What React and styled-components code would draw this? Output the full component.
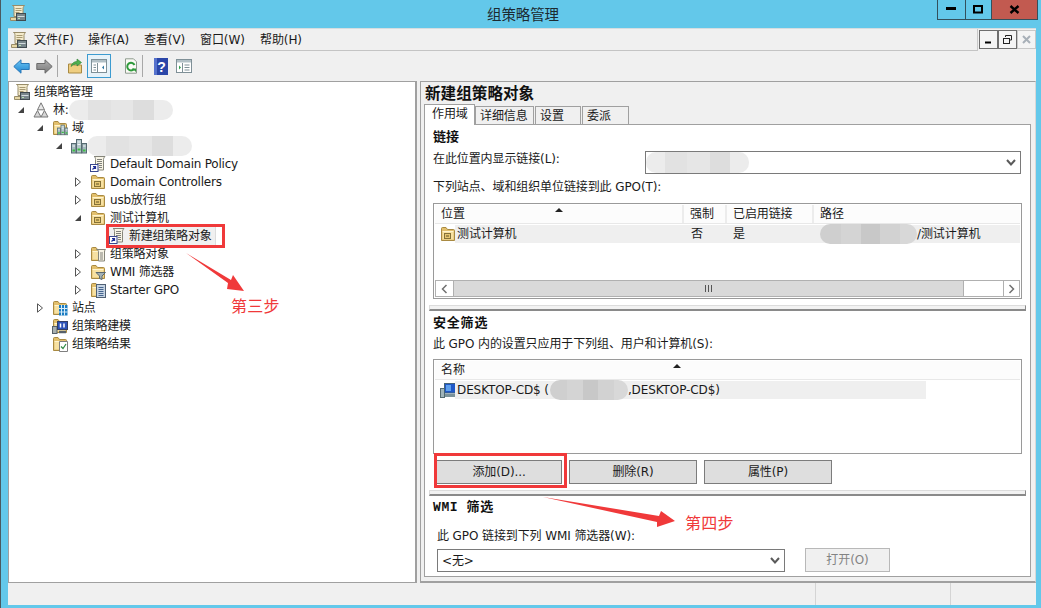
import React from 'react';
import styled, { createGlobalStyle } from 'styled-components';

const GlobalStyle = createGlobalStyle`
  html, body {
    margin: 0;
    padding: 0;
    width: 1041px;
    height: 608px;
    overflow: hidden;
    background: #63c8ea;
  }
  * {
    box-sizing: border-box;
  }
`;

const Page = styled.div`
  position: relative;
  width: 1041px;
  height: 608px;
  display: flex;
  flex-direction: column;
  padding: 0 5px 3px 7px;
  background: #63c8ea;
  border-left: 1px solid #4a5a60;
  font: 12px/16px "DejaVu Sans", "Noto Sans CJK SC", sans-serif;
  letter-spacing: -0.1px;
  color: #1a1a1a;
`;

const TitleBar = styled.header`
  height: 28px;
  flex: none;
  display: grid;
  grid-template-columns: 1fr auto 1fr;
  margin-right: -2px;
`;

const TitleIcon = styled.div`
  padding: 5px 0 0 2px;
`;

const TitleText = styled.h1`
  margin: 5px 0 0;
  font: 400 14.5px/18px "Noto Sans CJK SC", sans-serif;
  color: #1c2a30;
`;

const WindowButtons = styled.div`
  justify-self: end;
  display: flex;
  height: 20px;
  border: 1px solid #33505c;
  border-top: 0;
`;

const WindowButton = styled.button`
  width: ${({ $w }) => $w}px;
  padding: 0;
  border: 0;
  border-left: ${({ $first }) => ($first ? 0 : '1px solid #33505c')};
  background: ${({ $close }) => ($close ? '#c25a50' : 'transparent')};
  display: flex;
  align-items: center;
  justify-content: center;
`;

const Client = styled.div`
  flex: 1;
  min-height: 0;
  display: flex;
  flex-direction: column;
  background: #f0f0f0;
  border-top: 1px solid #d5dde0;
`;

const MenuRow = styled.div`
  height: 22px;
  flex: none;
  display: flex;
`;

const MenuBar = styled.nav`
  flex: 1;
  display: flex;
  align-items: center;
  padding-left: 3px;
  border-right: 1px solid #c8c8c8;
  border-bottom: 1px solid #c4c4c4;
`;

const MenuItem = styled.span`
  width: ${({ $w }) => $w}px;
  flex: none;
`;

const MdiButtons = styled.div`
  display: flex;
  padding: 1px 0 0 1px;
  height: 21px;
`;

const MdiButton = styled.button`
  width: 19px;
  height: 19px;
  padding: 0;
  border: 1px solid ${({ $off }) => ($off ? '#c8c8c8' : '#6e6e6e')};
  background: #f4f4f4;
  display: flex;
  align-items: center;
  justify-content: center;
`;

const Toolbar = styled.div`
  height: 30px;
  flex: none;
  display: flex;
  align-items: center;
  padding-left: 4px;
`;

const ToolIcon = styled.div`
  width: ${({ $w }) => $w || 18}px;
  height: 24px;
  margin-left: ${({ $gap }) => $gap || 0}px;
  display: flex;
  align-items: center;
  justify-content: center;
  flex: none;
  ${({ $active }) => $active && `
    background: #e6f2f9;
    border: 1px solid #3c9bd0;
  `}
`;

const ToolSeparator = styled.div`
  width: 1px;
  height: 22px;
  margin-left: ${({ $gap }) => $gap}px;
  background: #a8a8a8;
  flex: none;
`;

const Main = styled.main`
  flex: 1;
  min-height: 0;
  display: flex;
`;

const TreePane = styled.section`
  width: 409px;
  flex: none;
  padding-top: 1px;
  background: #fff;
  border-top: 1px solid #a0a0a0;
  border-left: 1px solid #a0a0a0;
  border-right: 2px solid #a0a0a0;
  border-bottom: 1px solid #a0a0a0;
  letter-spacing: -0.22px;
`;

const TreeRow = styled.div`
  height: 18px;
  display: flex;
  align-items: center;
  padding-left: ${({ $level }) => ($level === 0 ? 5 : 19 * $level - 14)}px;
  white-space: nowrap;
`;

const ExpanderSlot = styled.span`
  width: 19px;
  height: 18px;
  flex: none;
  display: flex;
  align-items: center;
  padding-left: 3px;
`;

const TreeItem = styled.span`
  display: flex;
  align-items: center;
  flex: none;
  ${({ $selected }) => $selected && `
    height: 20px;
    margin-left: -2px;
    padding: 0 4px 0 1px;
    background: #f0f0f0;
    border: 1px solid #dcdcdc;
  `}
`;

const TreeLabel = styled.span`
  margin-left: 4px;
`;

const Blob = styled.span`
  display: inline-block;
  flex: none;
  width: ${({ $w }) => $w}px;
  height: ${({ $h }) => $h || 20}px;
  margin: -2px ${({ $mr }) => $mr || 0}px -2px ${({ $ml }) => $ml || 0}px;
  vertical-align: middle;
  border-radius: 10px;
  background: linear-gradient(90deg,
    #ececec 0 18%, #e2e2e2 18% 40%, #e6e6e6 40% 62%, #dddddd 62% 82%, #ececec 82% 100%);
`;

const DarkBlob = styled(Blob)`
  background: linear-gradient(90deg,
    #cfcfcf 0 22%, #d4d4d4 22% 42%, #c8c8c8 42% 62%, #d2d2d2 62% 82%, #d8d8d8 82% 100%);
`;

const Splitter = styled.div`
  width: 3px;
  flex: none;
  background: #f0f0f0;
`;

const DetailPane = styled.section`
  flex: 1;
  min-width: 0;
  display: flex;
  flex-direction: column;
  padding: 0 4px 4px 3px;
  background: #f0f0f0;
  border: 1px solid #a0a0a0;
  border-right-color: #d8d8d8;
  border-bottom: 2px solid #a0a0a0;
`;

const DetailTitle = styled.h2`
  margin: 0 0 0 1px;
  height: 20px;
  flex: none;
  font: 700 15.6px/20px "Noto Sans CJK SC", sans-serif;
  letter-spacing: 0;
  color: #111;
`;

const Tabs = styled.div`
  height: 20px;
  flex: none;
  display: flex;
  align-items: flex-end;
  position: relative;
  z-index: 1;
  margin: 3px 0 -1px;
`;

const Tab = styled.div`
  width: ${({ $w }) => $w}px;
  height: ${({ $active }) => ($active ? 21 : 19)}px;
  flex: none;
  padding-left: ${({ $active }) => ($active ? 7 : 4)}px;
  line-height: 18px;
  background: ${({ $active }) => ($active ? '#fff' : '#f0f0f0')};
  border: 1px solid #a0a0a0;
  border-bottom: ${({ $active }) => ($active ? 0 : '1px solid #a0a0a0')};
  margin-right: ${({ $gap }) => $gap || 0}px;
`;

const TabPanel = styled.div`
  flex: 1;
  min-height: 0;
  background: #fff;
  border: 1px solid #a0a0a0;
  padding: 2px 8px 0;
`;

const SectionHead = styled.h3`
  margin: ${({ $mt }) => $mt || 0}px 0 0;
  height: 18px;
  font: 700 13px/18px "Noto Sans CJK SC", sans-serif;
  letter-spacing: ${({ $ls }) => $ls || 0}px;
  color: #111;
`;

const WmiHead = styled(SectionHead)`
  font-family: "Liberation Mono", "Noto Sans CJK SC", monospace;
  letter-spacing: 0.6px;
`;

const FieldLabel = styled.div`
  margin-top: ${({ $mt }) => $mt || 0}px;
  height: 16px;
  white-space: nowrap;
`;

const ComboLabel = styled(FieldLabel)`
  width: 212px;
  flex: none;
`;

const ComboRow = styled.div`
  display: flex;
  margin-top: 6px;
  height: 22px;
`;

const Combo = styled.div`
  width: ${({ $w }) => $w}px;
  height: 23px;
  margin-left: ${({ $ml }) => $ml || 0}px;
  flex: none;
  display: flex;
  align-items: center;
  justify-content: space-between;
  padding: 0 4px 0 ${({ $pl }) => $pl || 0}px;
  background: #fff;
  border: 1px solid #7a7a7a;
  overflow: hidden;
`;

const ListBox = styled.div`
  height: ${({ $h }) => $h}px;
  margin-top: ${({ $mt }) => $mt}px;
  border: 1px solid #9a9a9a;
  display: flex;
  flex-direction: column;
  padding: 1px;
`;

const ListHead = styled.div`
  height: 19px;
  flex: none;
  display: flex;
  background: #fcfcfc;
  border-bottom: 1px solid #e8e8e8;
`;

const HeadCell = styled.div`
  position: relative;
  width: ${({ $w }) => ($w ? `${$w}px` : 'auto')};
  flex: ${({ $w }) => ($w ? 'none' : 1)};
  padding-left: 6px;
  line-height: 19px;
  border-right: ${({ $w }) => ($w ? '2px solid #ececec' : 0)};
`;

const SortMark = styled.span`
  position: absolute;
  left: ${({ $x }) => $x}px;
  top: 3px;
  width: 0;
  height: 0;
  border-left: 4px solid transparent;
  border-right: 4px solid transparent;
  border-bottom: 4px solid #222;
`;

const ListRow = styled.div`
  height: 19px;
  flex: none;
  display: flex;
  align-items: center;
  padding-left: 5px;
  white-space: nowrap;
`;

const RowIcon = styled.span`
  width: 15px;
  height: 16px;
  flex: none;
`;

const RowFill = styled.div`
  display: flex;
  align-items: center;
  width: ${({ $w }) => ($w ? `${$w}px` : 'auto')};
  flex: ${({ $w }) => ($w ? 'none' : 1)};
  height: 18px;
  padding-left: 2px;
  background: #efefef;
`;

const RowCell = styled.span`
  width: ${({ $w }) => ($w ? `${$w}px` : 'auto')};
  flex: none;
`;

const HScroll = styled.div`
  height: 17px;
  flex: none;
  margin-top: auto;
  display: flex;
  border: 1px solid #b0b0b0;
`;

const ScrollArrow = styled.div`
  width: ${({ $w }) => $w}px;
  flex: none;
  display: flex;
  align-items: center;
  justify-content: center;
  border-right: ${({ $left }) => ($left ? '1px solid #b0b0b0' : 0)};
  border-left: ${({ $left }) => ($left ? 0 : '1px solid #b0b0b0')};
  background: #fff;
`;

const ScrollThumb = styled.div`
  width: 510px;
  flex: none;
  display: flex;
  align-items: center;
  justify-content: center;
  background: #d9d9d9;
  border-right: 1px solid #b0b0b0;
`;

const ThumbGrip = styled.span`
  width: 7px;
  height: 7px;
  background: repeating-linear-gradient(90deg, #555 0 1px, transparent 1px 3px);
`;

const ScrollTrack = styled.div`
  flex: 1;
  background: #fff;
`;

const PaneDivider = styled.div`
  height: 6px;
  margin: ${({ $mt }) => $mt}px -4px 0 -4px;
  background: #f2f2f2;
  border-top: 1px solid #dcdcdc;
  border-bottom: 2px solid #8a8a8a;
  border-right: 1px solid #8a8a8a;
  border-left: 1px solid #dcdcdc;
`;

const ButtonRow = styled.div`
  display: flex;
  gap: 7px;
  margin: 6px 0 0 3px;
`;

const Button = styled.button`
  width: ${({ $w }) => $w}px;
  height: 24px;
  padding: 0;
  flex: none;
  font: inherit;
  letter-spacing: -0.1px;
  color: ${({ disabled }) => (disabled ? '#838383' : '#1a1a1a')};
  background: ${({ disabled }) => (disabled ? '#f0f0f0' : '#dedede')};
  border: 1px solid ${({ disabled }) => (disabled ? '#b8b8b8' : '#7c7c7c')};
`;

const WmiRow = styled.div`
  display: flex;
  align-items: flex-end;
  gap: 20px;
  height: 24px;
  margin: 4px 0 0 4px;
`;

const WmiLabel = styled(FieldLabel)`
  margin-left: 4px;
`;

const StatusBar = styled.footer`
  height: 22px;
  flex: none;
  display: flex;
  justify-content: flex-end;
  background: #f0f0f0;
`;

const StatusCell = styled.div`
  width: ${({ $w }) => $w}px;
  border-left: 1px solid #d4d4d4;
`;

const Marker = styled.div`
  position: absolute;
  border: 3px solid #f0393a;
  pointer-events: none;
  left: ${({ $x }) => $x}px;
  top: ${({ $y }) => $y}px;
  width: ${({ $w }) => $w}px;
  height: ${({ $h }) => $h}px;
`;

const ArrowLayer = styled.svg`
  position: absolute;
  left: 0;
  top: 0;
  width: 1041px;
  height: 608px;
  pointer-events: none;
`;

const StepNote = styled.div`
  position: absolute;
  left: ${({ $x }) => $x}px;
  top: ${({ $y }) => $y}px;
  font: 400 16px/20px "Noto Sans CJK SC", sans-serif;
  letter-spacing: 0.3px;
  color: #f0393a;
  white-space: nowrap;
`;

/* icons */

const Svg = ({ w = 16, h = 16, children }) => (
  <svg width={w} height={h} viewBox={`0 0 ${w} ${h}`} style={{ display: 'block', flex: 'none' }}>
    {children}
  </svg>
);

const ExpandOpen = () => (
  <Svg w={8} h={8}><path d="M7 1v6H1z" fill="#444" /></Svg>
);

const ExpandClosed = () => (
  <Svg w={8} h={10}><path d="M1.5 .8 6.5 5 1.5 9.2z" fill="#fff" stroke="#555" /></Svg>
);

const ScrollIcon = () => (
  <Svg>
    <path d="M2.5 .5h12c-1 1-1.500 2-1.500 3v8H4v-8c0-1.500-.5-3-1.500-3z" fill="#f4ebcc" stroke="#988c68" />
    <path d="M5.500 3.500h6M5.500 5.500h6M5.500 7.500h4" stroke="#a89a72" />
    <path d="M.5 12.500h7v3h-7z" fill="#e6d7a6" stroke="#988c68" />
    <rect x="6.500" y="8.500" width="9" height="7" fill="#79878c" stroke="#3f4a4f" />
    <path d="M7.500 11.500h7" stroke="#d3dcdf" />
    <path d="M8 13.500h2" stroke="#b8e0b0" />
  </Svg>
);

const ForestIcon = () => (
  <Svg>
    <path d="M8 .8 11.500 7.800h-7z" fill="#e8e8e8" stroke="#777" />
    <path d="M4.500 8.500 8 15H1z" fill="#d6d6d6" stroke="#777" />
    <path d="M11.500 8.500 15 15H8z" fill="#d6d6d6" stroke="#777" />
  </Svg>
);

const Servers = () => (
  <>
    <rect x=".5" y="5.500" width="4.500" height="9.500" fill="#a4b8bd" stroke="#566b71" />
    <rect x="5.500" y="1.500" width="5" height="13.500" fill="#b4c6ca" stroke="#566b71" />
    <rect x="11" y="5.500" width="4.500" height="9.500" fill="#a4b8bd" stroke="#566b71" />
    <path d="M1.500 8h2.500M6.500 4h3M6.500 6.500h3M12 8h2.500" stroke="#f0f5f6" />
    <path d="M1.500 12.500h2.500M6.500 11.500h3M12 12.500h2.500" stroke="#3fbf46" strokeWidth="1.800" />
  </>
);

const DomainIcon = () => <Svg><Servers /></Svg>;

const FolderShape = ({ children }) => (
  <>
    <path d="M1.500 14.500v-12c0-.6.4-1 1-1h3.500l1.500 2h6c.6 0 1 .4 1 1v10z" fill="#e2bf6c" stroke="#a98a42" />
    <path d="M2.500 5.500h11v8h-11z" fill="#f7e1a2" />
    <path d="M2.500 5.500h11" stroke="#fff4cf" />
    {children}
  </>
);

const DomainsFolderIcon = () => (
  <Svg>
    <FolderShape />
    <g transform="translate(5 4) scale(.72)"><Servers /></g>
  </Svg>
);

const OuIcon = () => (
  <Svg>
    <FolderShape>
      <rect x="4.500" y="7.500" width="6" height="5" fill="#e6c670" stroke="#857136" />
      <path d="M6 10h3" stroke="#5f5026" />
    </FolderShape>
  </Svg>
);

const GpoLinkIcon = () => (
  <Svg>
    <path d="M4 .5h11c-1 1-1.500 2-1.500 3v10.500h-8V3.500c0-1.500-.5-3-1.500-3z" fill="#f7f4e6" stroke="#85857a" />
    <path d="M7 3.500h5M7 5.500h5M7 7.500h5M9 9.500h3M9 11.500h3" stroke="#80807a" />
    <rect x=".5" y="8.500" width="7.500" height="7" fill="#fff" stroke="#39478f" />
    <path d="M2.500 13.500 5.500 10.500M3 10.500h2.500V13" stroke="#1f2e96" strokeWidth="1.200" fill="none" />
  </Svg>
);

const GpoFolderIcon = () => (
  <Svg>
    <FolderShape />
    <path d="M6.500 3.500h9c-.8.800-1 1.500-1 2.500v9h-6V6c0-1-.5-2.500-2-2.500z" fill="#f7f4e6" stroke="#85857a" />
    <path d="M10 7h3M10 9h3M10 11h3M10 13h3" stroke="#80807a" />
  </Svg>
);

const WmiFolderIcon = () => (
  <Svg>
    <FolderShape />
    <path d="M6 8.500h9.500L12 12v3.500l-2.500-1V12z" fill="#a2b0b5" stroke="#5a686e" />
  </Svg>
);

const StarterFolderIcon = () => (
  <Svg>
    <FolderShape />
    <rect x="6.500" y="2.500" width="9" height="13" fill="#c6d4e3" stroke="#4f6074" />
    <path d="M8.500 5.500h5M8.500 7.500h5M8.500 9.500h5M8.500 11.500h5M8.500 13.500h5" stroke="#45648e" />
  </Svg>
);

const SitesIcon = () => (
  <Svg>
    <FolderShape />
    <rect x="7" y="5" width="8.500" height="10.500" fill="#1a7cc2" />
    <path d="M9.500 5v10.500M12.500 5v10.500M7 8.500h8.500M7 12h8.500" stroke="#d8ecf8" />
  </Svg>
);

const ModelingIcon = () => (
  <Svg>
    <FolderShape />
    <rect x=".5" y="8.500" width="4.500" height="7" fill="#a8b0b0" stroke="#56606a" />
    <rect x="5.500" y="3.500" width="10" height="8" fill="#2c52b8" stroke="#333e62" />
    <path d="M8.500 5.500v4M12 5.500v4" stroke="#fff" strokeWidth="1.500" />
    <path d="M7 14h7" stroke="#56606a" strokeWidth="2.500" />
  </Svg>
);

const ResultsIcon = () => (
  <Svg>
    <FolderShape />
    <path d="M7.500 5.500h8v10h-8z" fill="#fff" stroke="#7f7f7f" />
    <path d="M9 10.500l2 2 3-4.500" stroke="#2f8a44" strokeWidth="1.200" fill="none" />
  </Svg>
);

const ComputerIcon = () => (
  <Svg>
    <rect x=".5" y="6.500" width="4" height="9" fill="#9fb4ba" stroke="#546a70" />
    <rect x="4.500" y="1.500" width="11" height="9.500" fill="#1f58c8" stroke="#43637a" />
    <path d="M6 3h5v6H6z" fill="#5fa0ec" />
    <path d="M5 13.500h10.500" stroke="#7a929a" strokeWidth="3" />
  </Svg>
);

const NavArrow = ({ flip, top, bottom, line }) => (
  <svg width="17" height="15" viewBox="0 0 17 15" style={{ display: 'block', transform: flip ? 'scaleX(-1)' : 'none' }}>
    <defs>
      <linearGradient id={flip ? 'navF' : 'navB'} x1="0" y1="0" x2="0" y2="1">
        <stop offset="0" stopColor={top} />
        <stop offset="1" stopColor={bottom} />
      </linearGradient>
    </defs>
    <path d="M.8 7.500 8 .8v3.700h8.200v6H8v3.700z" fill={`url(#${flip ? 'navF' : 'navB'})`} stroke={line} />
  </svg>
);

const UpFolderIcon = () => (
  <Svg>
    <path d="M1.500 15v-9h4l1 1h8v8z" fill="#efce80" stroke="#a98a42" />
    <path d="M4 8.500c.5-3 3-5 6-5V1l4.500 3.500L10 8V6c-2.500 0-4.500 1-6 2.500z" fill="#4fb04f" stroke="#2e7d32" strokeWidth=".6" />
  </Svg>
);

const PanelIcon = ({ right }) => (
  <Svg>
    <rect x=".5" y="1.500" width="15" height="13" fill="#fff" stroke="#7f9097" />
    <path d="M1 2h14v2.500H1z" fill="#b2c0c6" />
    <path d="M6.500 5v9" stroke="#7f9097" />
    {right
      ? <>
          <path d="M3 7.500 5 9.500 3 11.500z" fill="#2fa24a" />
          <path d="M8.500 7h5M8.500 9.500h5M8.500 12h5" stroke="#7f9097" />
        </>
      : <>
          <path d="M13 7.500 11 9.500l2 2z" fill="#2f78a2" />
          <path d="M2.500 7h2.500M2.500 9.500h2.500M2.500 12h2.500" stroke="#7f9097" />
        </>}
  </Svg>
);

const RefreshIcon = () => (
  <Svg>
    <path d="M2.500 .8h8l3 3v11.400h-11z" fill="#fbfbf6" stroke="#8e9a8e" />
    <path d="M11.500 7A3.800 3.800 0 1 0 11 11" fill="none" stroke="#2f9a3c" strokeWidth="2" />
    <path d="M9 10.500h4v3.500z" fill="#2f9a3c" />
  </Svg>
);

const HelpIcon = () => (
  <svg width="14" height="17" viewBox="0 0 14 17" style={{ display: 'block' }}>
    <rect width="14" height="17" fill="#2b46a8" />
    <rect x="0" y="0" width="3" height="17" fill="#5672cc" />
    <text x="7.500" y="13.500" fontFamily="Liberation Sans" fontWeight="700" fontSize="14" textAnchor="middle" fill="#fff">?</text>
  </svg>
);

const Chevron = () => (
  <Svg w={10} h={7}><path d="M1 1 5 5.500 9 1" fill="none" stroke="#5a5a5a" strokeWidth="2" /></Svg>
);

const ScrollLeft = () => (
  <Svg w={7} h={10}><path d="M5.500 1 1.500 5l4 4" fill="none" stroke="#707070" strokeWidth="1.500" /></Svg>
);

const ScrollRight = () => (
  <Svg w={7} h={10}><path d="M1.500 1l4 4-4 4" fill="none" stroke="#707070" strokeWidth="1.500" /></Svg>
);

const TREE = [
  { level: 0, icon: <ScrollIcon />, text: '组策略管理' },
  { level: 1, open: true, icon: <ForestIcon />, text: '林:', blob: 104 },
  { level: 2, open: true, icon: <DomainsFolderIcon />, text: '域' },
  { level: 3, open: true, icon: <DomainIcon />, blob: 105 },
  { level: 4, icon: <GpoLinkIcon />, text: 'Default Domain Policy' },
  { level: 4, closed: true, icon: <OuIcon />, text: 'Domain Controllers' },
  { level: 4, closed: true, icon: <OuIcon />, text: 'usb放行组' },
  { level: 4, open: true, icon: <OuIcon />, text: '测试计算机' },
  { level: 5, icon: <GpoLinkIcon />, text: '新建组策略对象', selected: true },
  { level: 4, closed: true, icon: <GpoFolderIcon />, text: '组策略对象' },
  { level: 4, closed: true, icon: <WmiFolderIcon />, text: 'WMI 筛选器' },
  { level: 4, closed: true, icon: <StarterFolderIcon />, text: 'Starter GPO' },
  { level: 2, closed: true, icon: <SitesIcon />, text: '站点' },
  { level: 2, icon: <ModelingIcon />, text: '组策略建模' },
  { level: 2, icon: <ResultsIcon />, text: '组策略结果' },
];

const MENUS = [['文件(F)', 54], ['操作(A)', 56], ['查看(V)', 56], ['窗口(W)', 60], ['帮助(H)', 60]];

export default function App() {
  return (
    <Page>
      <GlobalStyle />
      <TitleBar>
        <TitleIcon><ScrollIcon /></TitleIcon>
        <TitleText>组策略管理</TitleText>
        <WindowButtons>
          <WindowButton $w={27} $first>
            <Svg w={11} h={5}><path d="M0 1.500h10" stroke="#000" strokeWidth="3" /></Svg>
          </WindowButton>
          <WindowButton $w={26}>
            <Svg w={11} h={9}><rect x="1" y="1" width="8" height="6.500" fill="none" stroke="#000" strokeWidth="2" /></Svg>
          </WindowButton>
          <WindowButton $w={46} $close>
            <Svg w={11} h={9}><path d="M1.500 1 9.500 8M9.500 1 1.500 8" stroke="#000" strokeWidth="2.400" /></Svg>
          </WindowButton>
        </WindowButtons>
      </TitleBar>
      <Client>
        <MenuRow>
          <MenuBar>
            <MenuItem $w={23}><ScrollIcon /></MenuItem>
            {MENUS.map(([label, width]) => <MenuItem key={label} $w={width}>{label}</MenuItem>)}
          </MenuBar>
          <MdiButtons>
            <MdiButton>
              <Svg w={9} h={9}><path d="M1 7.500h6" stroke="#000" strokeWidth="2" /></Svg>
            </MdiButton>
            <MdiButton>
              <Svg w={11} h={11}>
                <path d="M3.500 3V1.500h6v4.500H8" fill="none" stroke="#222" />
                <rect x="1.500" y="4.500" width="6" height="5" fill="#f4f4f4" stroke="#222" />
              </Svg>
            </MdiButton>
            <MdiButton $off>
              <Svg w={9} h={9}><path d="M1 1 8 8M8 1 1 8" stroke="#a8b0b8" strokeWidth="2" /></Svg>
            </MdiButton>
          </MdiButtons>
        </MenuRow>
        <Toolbar>
          <ToolIcon><NavArrow top="#6cc6f4" bottom="#1f84d0" line="#2a78b8" /></ToolIcon>
          <ToolIcon $gap={5}><NavArrow flip top="#b0b0b0" bottom="#787878" line="#6a6a6a" /></ToolIcon>
          <ToolSeparator $gap={4} />
          <ToolIcon $gap={8}><UpFolderIcon /></ToolIcon>
          <ToolIcon $w={24} $gap={3} $active><PanelIcon /></ToolIcon>
          <ToolIcon $gap={11}><RefreshIcon /></ToolIcon>
          <ToolSeparator $gap={2} />
          <ToolIcon $gap={9}><HelpIcon /></ToolIcon>
          <ToolIcon $gap={5}><PanelIcon right /></ToolIcon>
        </Toolbar>
        <Main>
          <TreePane>
            {TREE.map((node, i) => (
              <TreeRow key={i} $level={node.level}>
                {node.level > 0 && (
                  <ExpanderSlot>
                    {node.open && <ExpandOpen />}
                    {node.closed && <ExpandClosed />}
                  </ExpanderSlot>
                )}
                <TreeItem $selected={node.selected}>
                  {node.icon}
                  {node.text && <TreeLabel>{node.text}</TreeLabel>}
                </TreeItem>
                {node.blob && <Blob $w={node.blob} />}
              </TreeRow>
            ))}
          </TreePane>
          <Splitter />
          <DetailPane>
            <DetailTitle>新建组策略对象</DetailTitle>
            <Tabs>
              <Tab $w={51} $active>作用域</Tab>
              <Tab $w={59} $gap={1}>详细信息</Tab>
              <Tab $w={46} $gap={1}>设置</Tab>
              <Tab $w={47}>委派</Tab>
            </Tabs>
            <TabPanel>
              <SectionHead>链接</SectionHead>
              <ComboRow>
                <ComboLabel>在此位置内显示链接(L):</ComboLabel>
                <Combo $w={376}>
                  <Blob $w={103} $h={21} />
                  <Chevron />
                </Combo>
              </ComboRow>
              <FieldLabel $mt={6}>下列站点、域和组织单位链接到此 GPO(T):</FieldLabel>
              <ListBox $h={96} $mt={8}>
                <ListHead>
                  <HeadCell $w={249}>位置<SortMark $x={120} /></HeadCell>
                  <HeadCell $w={43}>强制</HeadCell>
                  <HeadCell $w={87}>已启用链接</HeadCell>
                  <HeadCell>路径</HeadCell>
                </ListHead>
                <ListRow>
                  <RowIcon><OuIcon /></RowIcon>
                  <RowFill>
                    <RowCell $w={234}>测试计算机</RowCell>
                    <RowCell $w={42}>否</RowCell>
                    <RowCell $w={87}>是</RowCell>
                    <DarkBlob $w={97} />
                    <span>/测试计算机</span>
                  </RowFill>
                </ListRow>
                <HScroll>
                  <ScrollArrow $w={18} $left><ScrollLeft /></ScrollArrow>
                  <ScrollThumb><ThumbGrip /></ScrollThumb>
                  <ScrollTrack />
                  <ScrollArrow $w={16}><ScrollRight /></ScrollArrow>
                </HScroll>
              </ListBox>
              <PaneDivider $mt={6} />
              <SectionHead $mt={2} $ls={.8}>安全筛选</SectionHead>
              <FieldLabel $mt={5}>此 GPO 内的设置只应用于下列组、用户和计算机(S):</FieldLabel>
              <ListBox $h={95} $mt={7}>
                <ListHead>
                  <HeadCell>名称<SortMark $x={238} /></HeadCell>
                </ListHead>
                <ListRow>
                  <RowIcon><ComputerIcon /></RowIcon>
                  <RowFill $w={471}>
                    DESKTOP-CD$ (<DarkBlob $w={78} $ml={1} />,DESKTOP-CD$)
                  </RowFill>
                </ListRow>
              </ListBox>
              <ButtonRow>
                <Button $w={126}>添加(D)...</Button>
                <Button $w={128}>删除(R)</Button>
                <Button $w={128}>属性(P)</Button>
              </ButtonRow>
              <PaneDivider $mt={6} />
              <WmiHead $mt={3}>WMI 筛选</WmiHead>
              <WmiLabel $mt={11}>此 GPO 链接到下列 WMI 筛选器(W):</WmiLabel>
              <WmiRow>
                <Combo $w={348} $pl={4}>
                  &lt;无&gt;
                  <Chevron />
                </Combo>
                <Button $w={85} disabled>打开(O)</Button>
              </WmiRow>
            </TabPanel>
          </DetailPane>
        </Main>
        <StatusBar>
          <StatusCell $w={135} />
          <StatusCell $w={86} />
        </StatusBar>
      </Client>
      <Marker $x={105} $y={224} $w={119} $h={24} />
      <Marker $x={433} $y={453} $w={133} $h={35} />
      <ArrowLayer viewBox="0 0 1041 608">
        <path d="M185 253 230 280 232 275 243 291 226 289 227 283z" fill="#f0393a" />
        <path d="M542 497 658 516 660 511 674 521 656 527 656 522z" fill="#f0393a" />
      </ArrowLayer>
      <StepNote $x={230} $y={295}>第三步</StepNote>
      <StepNote $x={684} $y={512}>第四步</StepNote>
    </Page>
  );
}
